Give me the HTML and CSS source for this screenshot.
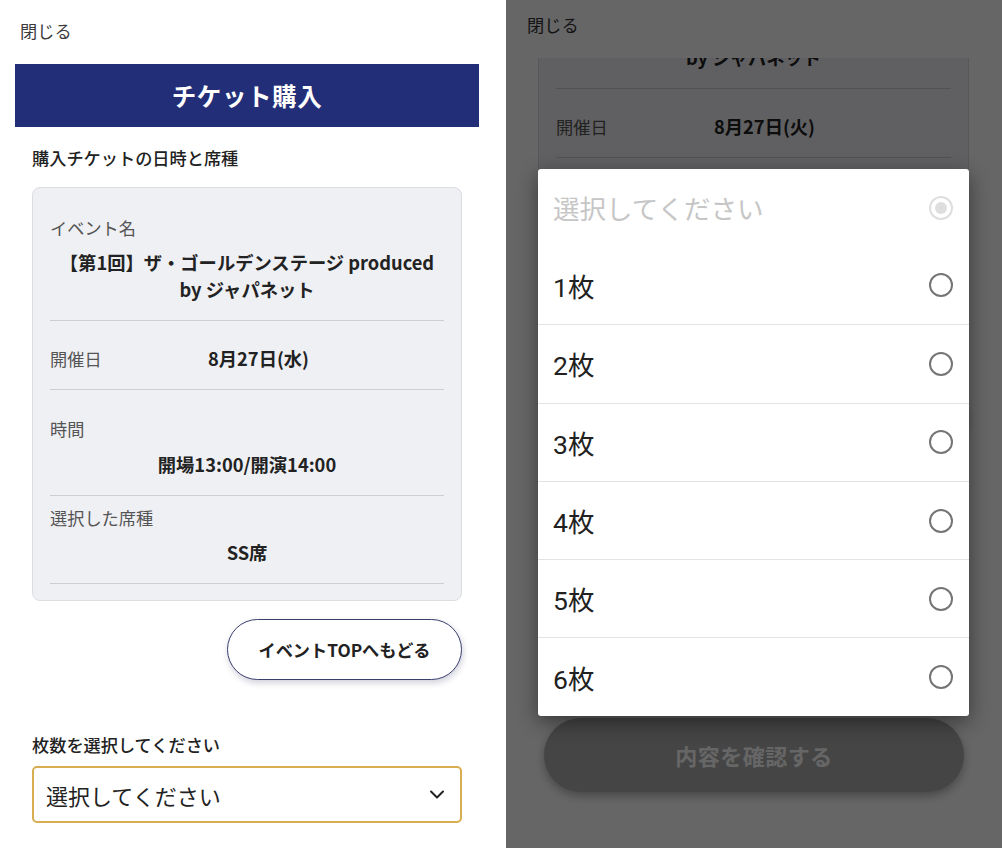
FILE: index.html
```html
<!DOCTYPE html>
<html lang="ja">
<head>
<meta charset="utf-8">
<title>チケット購入</title>
<link rel="stylesheet" href="styles.css">
</head>
<body>
<div class="screens">
  <section class="panel panel-left">
    <div class="page">
      <div class="close">閉じる</div>
      <h1 class="title-bar">チケット購入</h1>
      <h2 class="section-title">購入チケットの日時と席種</h2>
      <div class="card">
        <div class="row row-first">
          <div class="label">イベント名</div>
          <div class="value value-center">【第1回】ザ・ゴールデンステージ produced<br>by ジャパネット</div>
        </div>
        <div class="row row-inline">
          <div class="label label-fixed">開催日</div>
          <div class="value">8月27日(水)</div>
        </div>
        <div class="row">
          <div class="label">時間</div>
          <div class="value value-center">開場13:00/開演14:00</div>
        </div>
        <div class="row row-tight">
          <div class="label">選択した席種</div>
          <div class="value value-center">SS席</div>
        </div>
      </div>
      <div class="back-wrap"><button class="btn-outline" type="button">イベントTOPへもどる</button></div>
      <div class="field-label">枚数を選択してください</div>
      <div class="select">
        <span>選択してください</span>
        <svg class="chevron" width="14" height="9" viewBox="0 0 14 9"><polyline points="1,1.5 7,7.5 13,1.5" fill="none" stroke="#222" stroke-width="2" stroke-linecap="round" stroke-linejoin="round"/></svg>
      </div>
    </div>
  </section>

  <section class="panel panel-right">
    <div class="page page-under">
      <div class="close close-fixed">閉じる</div>
      <div class="scroll-view">
        <div class="scroll-content">
          <div class="card">
            <div class="row row-first">
              <div class="label">イベント名</div>
              <div class="value value-center">【第1回】ザ・ゴールデンステージ produced<br>by ジャパネット</div>
            </div>
            <div class="row row-inline">
              <div class="label label-fixed">開催日</div>
              <div class="value">8月27日(火)</div>
            </div>
            <div class="row">
              <div class="label">時間</div>
              <div class="value value-center">開場13:00/開演14:00</div>
            </div>
            <div class="row row-tight">
              <div class="label">選択した席種</div>
              <div class="value value-center">SS席</div>
            </div>
          </div>
          <div class="back-wrap"><button class="btn-outline" type="button">イベントTOPへもどる</button></div>
          <div class="field-label">枚数を選択してください</div>
          <div class="select">
            <span>選択してください</span>
            <svg class="chevron" width="14" height="9" viewBox="0 0 14 9"><polyline points="1,1.5 7,7.5 13,1.5" fill="none" stroke="#222" stroke-width="2" stroke-linecap="round" stroke-linejoin="round"/></svg>
          </div>
          <button class="btn-confirm" type="button">内容を確認する</button>
        </div>
      </div>
    </div>
    <div class="overlay"></div>
    <div class="dialog">
      <div class="option option-placeholder">
        <span>選択してください</span>
        <svg class="radio" width="24" height="24" viewBox="0 0 24 24"><circle cx="12" cy="12" r="11" fill="none" stroke="#dedede" stroke-width="2"/><circle cx="12" cy="12" r="6" fill="#dedede"/></svg>
      </div>
      <div class="option">
        <span>1枚</span>
        <svg class="radio" width="24" height="24" viewBox="0 0 24 24"><circle cx="12" cy="12" r="11" fill="none" stroke="#757575" stroke-width="2"/></svg>
      </div>
      <div class="option option-divided">
        <span>2枚</span>
        <svg class="radio" width="24" height="24" viewBox="0 0 24 24"><circle cx="12" cy="12" r="11" fill="none" stroke="#757575" stroke-width="2"/></svg>
      </div>
      <div class="option option-divided">
        <span>3枚</span>
        <svg class="radio" width="24" height="24" viewBox="0 0 24 24"><circle cx="12" cy="12" r="11" fill="none" stroke="#757575" stroke-width="2"/></svg>
      </div>
      <div class="option option-divided">
        <span>4枚</span>
        <svg class="radio" width="24" height="24" viewBox="0 0 24 24"><circle cx="12" cy="12" r="11" fill="none" stroke="#757575" stroke-width="2"/></svg>
      </div>
      <div class="option option-divided">
        <span>5枚</span>
        <svg class="radio" width="24" height="24" viewBox="0 0 24 24"><circle cx="12" cy="12" r="11" fill="none" stroke="#757575" stroke-width="2"/></svg>
      </div>
      <div class="option option-divided">
        <span>6枚</span>
        <svg class="radio" width="24" height="24" viewBox="0 0 24 24"><circle cx="12" cy="12" r="11" fill="none" stroke="#757575" stroke-width="2"/></svg>
      </div>
    </div>
  </section>
</div>
</body>
</html>
```

FILE: styles.css
```css
* {
  box-sizing: border-box;
}

html, body {
  margin: 0;
  padding: 0;
}

body {
  font-family: "Noto Sans CJK JP", "Noto Sans", sans-serif;
  color: #222;
  background: #ffffff;
}

.screens {
  display: flex;
  width: 1002px;
  height: 848px;
  overflow: hidden;
}

.panel {
  height: 848px;
  overflow: hidden;
  background: #ffffff;
}

.panel-left {
  width: 506px;
  flex: none;
}

.panel-right {
  width: 496px;
  flex: none;
  position: relative;
}

.page {
  width: 494px;
}

.close {
  padding: 19px 0 0 20px;
  font-size: 17.2px;
  line-height: 24px;
  color: #3c3c3c;
}

.title-bar {
  margin: 21px 15px 0;
  height: 63px;
  background: #232e78;
  color: #ffffff;
  font-size: 24.5px;
  font-weight: 700;
  letter-spacing: 0.6px;
  display: flex;
  align-items: center;
  justify-content: center;
}

.section-title {
  margin: 19px 32px 0;
  font-size: 17.2px;
  line-height: 24px;
  font-weight: 500;
  color: #222;
}

.card {
  margin: 17px 32px 0;
  background: #eff0f4;
  border: 1px solid #dcdde1;
  border-radius: 8px;
  padding: 0 17px 16px;
}

.row {
  display: flex;
  flex-direction: column;
  gap: 9px;
  padding: 24.5px 0 17.5px;
  border-bottom: 1px solid #cdced3;
}

.row-first {
  padding-top: 25.5px;
  gap: 8px;
}

.row-inline {
  flex-direction: row;
  gap: 0;
  padding-top: 23.5px;
}

.row-tight {
  padding-top: 7.5px;
  gap: 8px;
}

.label {
  font-size: 17.2px;
  line-height: 27px;
  color: #555;
}

.label-fixed {
  width: 158px;
  flex: none;
}

.value {
  font-size: 18.3px;
  line-height: 27px;
  font-weight: 700;
  color: #222;
}

.value-center {
  text-align: center;
}

.back-wrap {
  display: flex;
  justify-content: flex-end;
  margin: 18px 32px 0;
}

.btn-outline {
  width: 235px;
  height: 61px;
  border: 1.5px solid #3c3f6e;
  border-radius: 31px;
  background: #ffffff;
  color: #222;
  font-family: inherit;
  font-size: 17.2px;
  font-weight: 700;
  box-shadow: 1px 3px 6px rgba(40, 40, 90, 0.22);
  padding: 0;
}

.field-label {
  margin: 53px 32px 0;
  font-size: 17.2px;
  line-height: 24px;
  font-weight: 500;
  color: #222;
}

.select {
  margin: 9px 32px 0;
  height: 57px;
  border: 2px solid #d8ad52;
  border-radius: 5px;
  padding: 0 16px 0 12px;
  display: flex;
  align-items: center;
  justify-content: space-between;
  font-size: 22px;
  color: #222;
  background: #ffffff;
}

.chevron {
  display: block;
}

/* Right panel (page underneath the native picker) */

.page-under {
  width: 496px;
}

.close-fixed {
  height: 58px;
  padding: 13px 0 0 21px;
  color: #333;
}

.scroll-view {
  height: 790px;
  overflow: hidden;
}

.scroll-content {
  margin-top: -103px;
}

.page-under .card {
  margin: 0 33px 0 32px;
}

.page-under .back-wrap {
  margin-right: 34px;
}

.page-under .select {
  margin-right: 34px;
}

.btn-confirm {
  display: block;
  margin: 127px 38px 0;
  width: 420px;
  height: 74px;
  border: none;
  border-radius: 37px;
  background: #adadad;
  color: #ffffff;
  font-family: inherit;
  font-size: 22px;
  font-weight: 700;
  letter-spacing: 0.5px;
  box-shadow: 0 4px 10px rgba(0, 0, 0, 0.3);
}

.overlay {
  position: absolute;
  inset: 0;
  background: rgba(0, 0, 0, 0.6);
}

.dialog {
  position: absolute;
  left: 32px;
  top: 169px;
  width: 431px;
  background: #ffffff;
  border-radius: 3px;
  box-shadow: 0 6px 20px rgba(0, 0, 0, 0.45);
  overflow: hidden;
}

.option {
  height: 78.3px;
  display: flex;
  align-items: center;
  justify-content: space-between;
  padding: 0 16px 0 15px;
  font-family: Roboto, "Noto Sans CJK JP", sans-serif;
  font-size: 26.5px;
  color: #212121;
}

.option-placeholder {
  height: 77px;
  color: #c6c6c6;
}

.option-divided {
  border-top: 1px solid #e3e3e3;
}

.radio {
  display: block;
  flex: none;
}
```
